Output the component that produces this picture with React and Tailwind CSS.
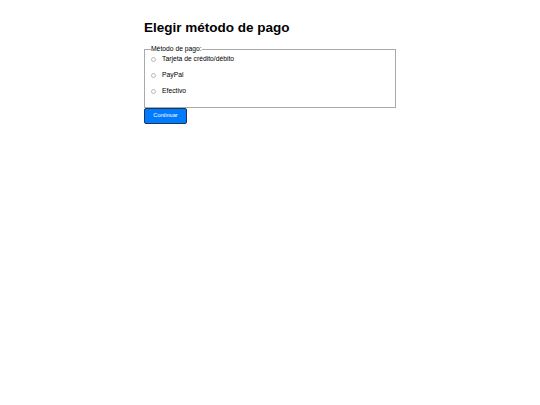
import React from "react";

const options = ["Tarjeta de crédito/débito", "PayPal", "Efectivo"];

export default function App() {
  return (
    <div className="min-h-[405px] bg-white" style={{ fontFamily: '"Liberation Sans", Arial, sans-serif' }}>
      <div className="w-[252px] mx-auto pt-[20px]">
        <h1 className="text-[13.5px] leading-[16px] font-bold text-black mb-[9px]">Elegir método de pago</h1>
        <fieldset className="border border-[#aaaaaa] px-[6px] pb-[12px]">
          <legend className="text-[6.75px] leading-[8px] text-black px-0">Método de pago:</legend>
          <div className="flex flex-col gap-[8px] pt-[2px]">
            {options.map((o) => (
              <label key={o} className="flex items-center gap-[6px] text-[6.75px] leading-[8px] text-black">
                <span className="w-[5px] h-[5px] rounded-full border border-[#b8b8b8] bg-white mt-[1px] shrink-0" />
                <span>{o}</span>
              </label>
            ))}
          </div>
        </fieldset>
        <button className="w-[43px] h-[16px] bg-[#007bff] border border-[#1d3550] rounded-[2px] text-white text-[5.6px] leading-none flex items-center justify-center">
          Continuar
        </button>
      </div>
    </div>
  );
}
